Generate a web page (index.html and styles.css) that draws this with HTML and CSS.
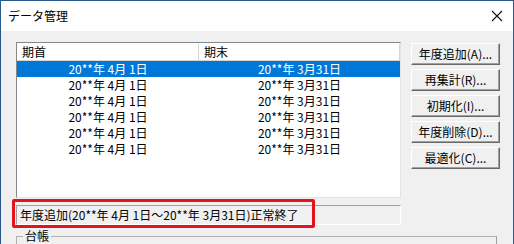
FILE: index.html
```html
<!DOCTYPE html>
<html lang="ja">
<head>
  <meta charset="UTF-8" />
  <title>データ管理</title>
  <link rel="stylesheet" href="styles.css">
</head>
<body>
  <div class="window">
    <div class="titlebar">
      <span class="title">データ管理</span>
      <svg class="close" width="12" height="12" viewBox="0 0 12 12">
        <path d="M1 1 L11 11 M11 1 L1 11" stroke="#111" stroke-width="1.1" fill="none"/>
      </svg>
    </div>
    <div class="client">
      <div class="main">
        <div class="list">
          <div class="list-head">
            <div class="hcell first">期首</div>
            <div class="hcell">期末</div>
          </div>
          <div class="row selected"><div class="cell first">20**年 4月 1日</div><div class="cell">20**年 3月31日</div></div>
          <div class="row"><div class="cell first">20**年 4月 1日</div><div class="cell">20**年 3月31日</div></div>
          <div class="row"><div class="cell first">20**年 4月 1日</div><div class="cell">20**年 3月31日</div></div>
          <div class="row"><div class="cell first">20**年 4月 1日</div><div class="cell">20**年 3月31日</div></div>
          <div class="row"><div class="cell first">20**年 4月 1日</div><div class="cell">20**年 3月31日</div></div>
          <div class="row"><div class="cell first">20**年 4月 1日</div><div class="cell">20**年 3月31日</div></div>
        </div>
        <div class="buttons">
          <div class="btn">年度追加(A)...</div>
          <div class="btn">再集計(R)...</div>
          <div class="btn">初期化(I)...</div>
          <div class="btn">年度削除(D)...</div>
          <div class="btn">最適化(C)...</div>
        </div>
      </div>
      <div class="status">年度追加(20**年 4月 1日～20**年 3月31日)正常終了</div>
      <div class="group"><span class="group-label">台帳</span></div>
      <div class="highlight"></div>
    </div>
  </div>
</body>
</html>
```

FILE: styles.css
```css
body {
  margin: 0;
  font-family: "Noto Sans CJK JP", "Noto Sans", sans-serif;
  font-size: 12px;
  color: #000;
  background: #fff;
}
.window {
  width: 514px;
  height: 244px;
  box-sizing: border-box;
  border: 1px solid #2a5a8c;
  border-bottom: none;
  overflow: hidden;
}
.titlebar {
  height: 30px;
  background: #fff;
  display: flex;
  align-items: center;
  justify-content: space-between;
  padding: 0 10px 0 7px;
}
.title {
  font-size: 12px;
  line-height: 14px;
}
.client {
  height: 213px;
  background: #f0f0f0;
  padding: 11px 0 0 15px;
  position: relative;
}
.main {
  display: flex;
  gap: 10px;
}
.list {
  width: 385px;
  height: 156px;
  box-sizing: border-box;
  background: #fff;
  border: 1px solid;
  border-color: #828790 #e3e3e3 #e3e3e3 #828790;
}
.list-head {
  display: flex;
  height: 18px;
  box-sizing: border-box;
  border-bottom: 1px solid #d5d5d5;
}
.hcell {
  flex: 1;
  padding-left: 5px;
  line-height: 16px;
  border-right: 1px solid #d5d5d5;
  border-top: 1px solid #fff;
}
.hcell.first {
  flex: 0 0 176px;
}
.row {
  display: flex;
  height: 16px;
  line-height: 16px;
}
.row.selected {
  background: #0078d7;
  color: #fff;
}
.cell {
  flex: 1;
  text-align: center;
}
.cell.first {
  flex: 0 0 182px;
}
.buttons {
  display: flex;
  flex-direction: column;
  gap: 4px;
  padding-top: 1px;
}
.btn {
  width: 89px;
  height: 22px;
  box-sizing: border-box;
  background: #f0f0f0;
  border: 1px solid;
  border-color: #fff #696969 #696969 #fff;
  box-shadow: inset -1px -1px 0 #a0a0a0;
  text-align: center;
  line-height: 19px;
  font-size: 12px;
}
.status {
  width: 385px;
  height: 20px;
  box-sizing: border-box;
  margin-top: 7px;
  border: 1px solid;
  border-color: #a0a0a0 #fff #fff #a0a0a0;
  padding-left: 3px;
  line-height: 18px;
  white-space: nowrap;
}
.group {
  margin-top: 11px;
  width: 481px;
  height: 30px;
  box-sizing: border-box;
  border: 1px solid #d5dfe5;
  border-right-color: #a0a0a0;
  border-top-color: #b0b0b0;
  border-left-color: #b0b0b0;
}
.group-label {
  display: inline-block;
  margin: -8px 0 0 6px;
  padding: 0 2px;
  background: #f0f0f0;
  line-height: 14px;
  vertical-align: top;
}
.highlight {
  position: absolute;
  left: 11px;
  top: 168px;
  width: 303px;
  height: 29px;
  box-sizing: border-box;
  border: 3px solid #e3141b;
  border-radius: 2px;
}
```
